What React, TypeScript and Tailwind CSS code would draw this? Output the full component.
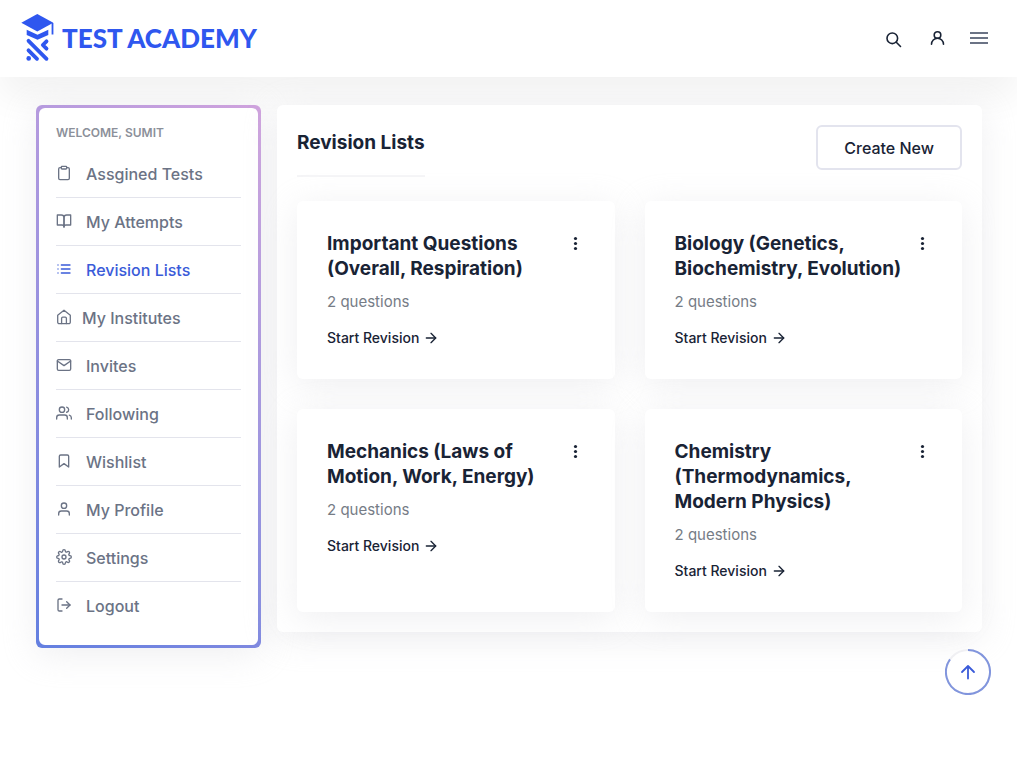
import React from 'react';
import {
  FiArrowRight,
  FiBookmark,
  FiBookOpen,
  FiClipboard,
  FiList,
  FiLogOut,
  FiMail,
  FiSettings,
  FiUser,
  FiUsers
} from 'react-icons/fi';
import type { IconType } from 'react-icons';

interface MenuItem {
  label: string;
  icon: IconType | React.FC;
  active?: boolean;
  tight?: boolean;
}

interface RevisionList {
  title: string;
  questions: number;
}

const HomeIcon: React.FC = () => (
  <svg width="16" height="16" viewBox="0 0 16 16" fill="none" stroke="currentColor" strokeWidth="1.3" strokeLinecap="round" strokeLinejoin="round">
    <path d="M1.700 6.200 8 1.200l6.300 5v7a1.500 1.500 0 0 1-1.500 1.500H3.200a1.500 1.500 0 0 1-1.500-1.500z" />
    <path d="M5.600 14.500V9.300a1.200 1.200 0 0 1 1.200-1.200h2.400a1.200 1.200 0 0 1 1.200 1.200v5.200" />
  </svg>
);

const menuItems: MenuItem[] = [
  { label: 'Assgined Tests', icon: FiClipboard },
  { label: 'My Attempts', icon: FiBookOpen },
  { label: 'Revision Lists', icon: FiList, active: true },
  { label: 'My Institutes', icon: HomeIcon, tight: true },
  { label: 'Invites', icon: FiMail },
  { label: 'Following', icon: FiUsers },
  { label: 'Wishlist', icon: FiBookmark },
  { label: 'My Profile', icon: FiUser },
  { label: 'Settings', icon: FiSettings },
  { label: 'Logout', icon: FiLogOut }
];

const revisionLists: RevisionList[] = [
  { title: 'Important Questions (Overall, Respiration)', questions: 2 },
  { title: 'Biology (Genetics, Biochemistry, Evolution)', questions: 2 },
  { title: 'Mechanics (Laws of Motion, Work, Energy)', questions: 2 },
  { title: 'Chemistry (Thermodynamics, Modern Physics)', questions: 2 }
];

const Logo: React.FC = () => (
  <a href="#" className="flex items-center gap-2 text-[#2f57ef]">
    <svg width="33" height="50" viewBox="0 0 33 50" fill="currentColor">
      <path d="M.3 8.800 16.300 0l16 8.800-16 8.700z" />
      <path d="M31.500 9v11.500" stroke="currentColor" strokeWidth="1.800" />
      <path d="M5.700 15.800 16.500 20.800l10.800-5v5.200L16.500 25.800 5.700 21z" />
      <g stroke="currentColor" strokeWidth="3.800" strokeLinecap="round" strokeLinejoin="round" fill="none">
        <path d="M7.500 26.800 25.500 44.800" />
        <path d="M7.500 36.300l8.500 8.500" />
        <path d="M25.500 27.300l-3.700 3.700 3.700 3.700" />
      </g>
      <circle cx="7.700" cy="44.400" r="2.300" />
    </svg>
    <span className="pb-0.5 font-['Lato',sans-serif] text-[26px] leading-8 font-black">TEST ACADEMY</span>
  </a>
);

const Header: React.FC = () => (
  <header className="flex h-[77px] items-center justify-between bg-white pr-7 pl-[21px] shadow-[0_20px_34px_rgba(0,0,0,0.05)]">
    <Logo />
    <div className="flex items-center gap-[22px] text-[#192335]">
      <button type="button" aria-label="Search">
        <svg width="20" height="20" viewBox="0 0 20 20" fill="none" stroke="currentColor" strokeWidth="1.6" strokeLinecap="round">
          <circle cx="7.300" cy="9.300" r="5.300" />
          <path d="m11.300 13.300 4.200 4.200" />
        </svg>
      </button>
      <button type="button" aria-label="Account">
        <svg width="20" height="20" viewBox="0 0 20 20" fill="none" stroke="currentColor" strokeWidth="1.6" strokeLinecap="round">
          <circle cx="10.500" cy="6" r="3.300" />
          <path d="M4.500 15.300a6 6 0 0 1 12 0" />
        </svg>
      </button>
      <button type="button" aria-label="Menu" className="text-[#6b7385]">
        <svg width="20" height="20" viewBox="0 0 20 20" stroke="currentColor" strokeWidth="2">
          <path d="M1 4h18M1 9h18M1 14h18" />
        </svg>
      </button>
    </div>
  </header>
);

const Sidebar: React.FC = () => (
  <aside className="self-start rounded-md bg-linear-38 from-[#637fe0] to-[#cfa2dd] p-[3px] shadow-[0_6px_34px_rgba(215,216,222,0.41)]">
    <nav className="rounded-md bg-white px-[17px] py-4">
      <h6 className="mb-2 text-xs leading-[18px] font-semibold text-[#8c909a] uppercase">Welcome, Sumit</h6>
      <ul className="divide-y divide-[#e3e4ec]">
        {menuItems.map(({ label, icon: Icon, active, tight }) => (
          <li key={label}>
            <a
              href="#"
              className={`flex h-[47px] items-center text-base font-medium ${tight ? 'gap-2.5' : 'gap-3.5'} ${
                active ? 'text-[#3a5bd9]' : 'text-[#6b7385]'
              }`}
            >
              <span className="pb-0.5">
                <Icon />
              </span>
              {label}
            </a>
          </li>
        ))}
      </ul>
    </nav>
  </aside>
);

const RevisionCard: React.FC<{ list: RevisionList }> = ({ list }) => (
  <article className="rounded-md bg-white p-[30px] shadow-[0_6px_34px_rgba(215,216,222,0.41)]">
    <div className="flex items-start">
      <h4 className="flex-1 text-[19px] leading-[25px] font-bold">{list.title}</h4>
      <button type="button" aria-label="More options" className="flex h-[25px] w-[19px] shrink-0 items-center">
        <svg width="19" height="15" viewBox="0 0 19 15" fill="currentColor">
          <circle cx="9.500" cy="2.500" r="1.600" />
          <circle cx="9.500" cy="7.500" r="1.600" />
          <circle cx="9.500" cy="12.500" r="1.600" />
        </svg>
      </button>
    </div>
    <p className="mt-2 text-[15px] leading-[26px] text-[#767c86]">{list.questions} questions</p>
    <a href="#" className="mt-3 flex items-center gap-1 text-sm leading-[22px] font-medium">
      Start Revision
      <FiArrowRight size={16} />
    </a>
  </article>
);

export default function App() {
  return (
    <div className="min-h-screen bg-white font-['Inter',sans-serif] text-[#192335]">
      <Header />
      <div className="grid grid-cols-[225px_1fr] gap-4 pt-7 pr-[35px] pb-8 pl-9">
        <Sidebar />
        <main className="self-start rounded-md bg-white p-5 shadow-[0_6px_34px_rgba(215,216,222,0.41)]">
          <div className="mb-6 flex items-start justify-between">
            <h1 className="border-b-2 border-[#f5f5f7] pb-3.5 text-[19px] leading-9 font-bold">Revision Lists</h1>
            <button type="button" className="h-[45px] rounded-md border-2 border-[#e3e4ee] px-[26px] text-base font-medium">
              Create New
            </button>
          </div>
          <div className="grid grid-cols-2 gap-[30px]">
            {revisionLists.map((list) => (
              <RevisionCard key={list.title} list={list} />
            ))}
          </div>
        </main>
      </div>
      <button
        type="button"
        aria-label="Back to top"
        className="fixed right-[26px] bottom-[69px] size-[46px] rounded-full bg-white text-[#3a5bd9]"
      >
        <svg width="46" height="46" viewBox="0 0 46 46" fill="none" stroke="currentColor" strokeLinecap="round" strokeLinejoin="round">
          <circle cx="23" cy="23" r="22" stroke="#f0f0f3" strokeWidth="2" />
          <path d="M23 1A22 22 0 1 1 5 10.300" stroke="#8195dd" strokeWidth="2" strokeLinecap="butt" />
          <path d="M23 29.500V17.500M17 23l6-6 6 6" strokeWidth="1.800" />
        </svg>
      </button>
    </div>
  );
}
